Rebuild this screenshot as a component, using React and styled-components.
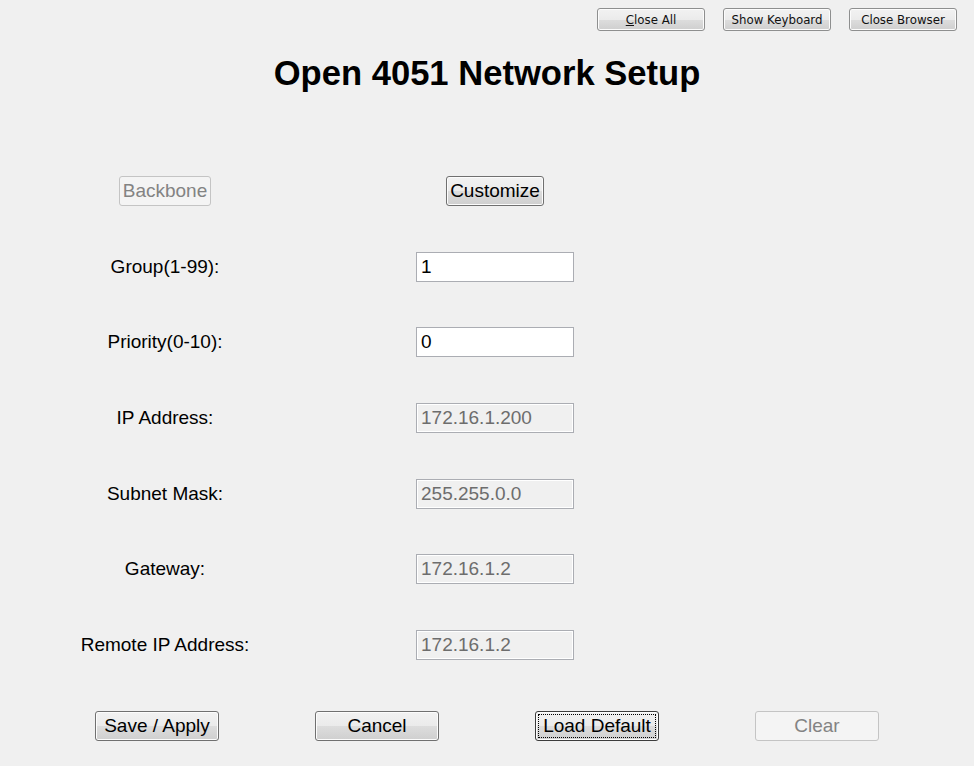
import React from "react";
import styled, { createGlobalStyle } from "styled-components";

const GlobalStyle = createGlobalStyle`
  html, body {
    margin: 0;
    padding: 0;
    background: #f0f0f0;
  }
  body {
    font-family: "Liberation Sans", Arial, sans-serif;
    color: #000;
  }
`;

const rows = [
  { label: "Group(1-99):", value: "1" },
  { label: "Priority(0-10):", value: "0" },
  { label: "IP Address:", value: "172.16.1.200", disabled: true },
  { label: "Subnet Mask:", value: "255.255.0.0", disabled: true },
  { label: "Gateway:", value: "172.16.1.2", disabled: true },
  { label: "Remote IP Address:", value: "172.16.1.2", disabled: true },
];

const App = () => {
  return (
    <Page>
      <GlobalStyle />
      <TopBar>
        <SysButton><u>C</u>lose All</SysButton>
        <SysButton>Show Keyboard</SysButton>
        <SysButton>Close Browser</SysButton>
      </TopBar>
      <Title>Open 4051 Network Setup</Title>
      <Form>
        <Cell><FormButton disabled>Backbone</FormButton></Cell>
        <Cell><FormButton>Customize</FormButton></Cell>
        {rows.map(r => (
          <React.Fragment key={r.label}>
            <Cell><Label>{r.label}</Label></Cell>
            <Field disabled={r.disabled} defaultValue={r.value} readOnly={r.disabled} />
          </React.Fragment>
        ))}
      </Form>
      <Actions>
        <ActionButton>Save / Apply</ActionButton>
        <ActionButton>Cancel</ActionButton>
        <ActionButton focused>Load Default</ActionButton>
        <ActionButton disabled>Clear</ActionButton>
      </Actions>
    </Page>
  );
};

export default App;

const Page = styled.div`
  width: 974px;
  height: 766px;
  display: flex;
  flex-direction: column;
  overflow: hidden;
`;

const TopBar = styled.div`
  display: flex;
  justify-content: flex-end;
  gap: 18px;
  padding: 8px 17px 0 0;
`;

const SysButton = styled.button`
  width: 108px;
  height: 23px;
  padding: 0;
  font-family: "DejaVu Sans", Tahoma, sans-serif;
  font-size: 11.8px;
  color: #111;
  border: 1px solid #8e8f8f;
  border-radius: 3px;
  background: linear-gradient(#f2f2f2 0%, #ebebeb 50%, #dddddd 51%, #cfcfcf 100%);
  box-shadow: inset 0 0 0 1px #fcfcfc;
  u { text-decoration: underline; }
`;

const Title = styled.h1`
  margin: 22px 0 0;
  height: 40px;
  line-height: 40px;
  text-align: center;
  font-size: 34.6px;
  font-weight: bold;
`;

const Form = styled.div`
  display: grid;
  grid-template-columns: 330px 158px;
  grid-auto-rows: 30px;
  column-gap: 86px;
  row-gap: 45.67px;
  margin-top: 83px;
`;

const Cell = styled.div`
  display: flex;
  align-items: center;
  justify-content: center;
`;

const Label = styled.span`
  font-size: 19px;
`;

const FormButton = styled.button`
  height: 30px;
  padding: 0 3px;
  font-family: "Liberation Sans", Arial, sans-serif;
  font-size: 19px;
  color: ${p => p.disabled ? "#838383" : "#000"};
  border: 1px solid ${p => p.disabled ? "#c4c4c4" : "#707070"};
  border-radius: 3px;
  background: ${p => p.disabled
    ? "#f4f4f4"
    : "linear-gradient(#f2f2f2 0%, #ebebeb 50%, #dddddd 51%, #cfcfcf 100%)"};
  box-shadow: inset 0 0 0 1px ${p => p.disabled ? "#f4f4f4" : "#fcfcfc"};
`;

const Field = styled.input`
  box-sizing: border-box;
  width: 158px;
  height: 30px;
  padding: 0 4px;
  font-family: "Liberation Sans", Arial, sans-serif;
  font-size: 19px;
  color: ${p => p.disabled ? "#6d6d6d" : "#000"};
  -webkit-text-fill-color: ${p => p.disabled ? "#6d6d6d" : "#000"};
  opacity: 1;
  border: 1px solid #abadb3;
  border-radius: 0;
  outline: none;
  background: ${p => p.disabled ? "#f0f0f0" : "#fff"};
  box-shadow: ${p => p.disabled ? "inset 0 0 0 1px #fff" : "none"};
`;

const Actions = styled.div`
  display: flex;
  gap: 96px;
  padding-left: 95px;
  margin-top: 51px;
`;

const ActionButton = styled.button`
  width: 124px;
  height: 30px;
  padding: 0;
  font-family: "Liberation Sans", Arial, sans-serif;
  font-size: 19px;
  color: ${p => p.disabled ? "#838383" : "#000"};
  border: 1px solid ${p => p.disabled ? "#c4c4c4" : p.focused ? "#3c3c3c" : "#707070"};
  border-radius: 3px;
  background: ${p => p.disabled
    ? "#f4f4f4"
    : "linear-gradient(#f2f2f2 0%, #ebebeb 50%, #dddddd 51%, #cfcfcf 100%)"};
  box-shadow: inset 0 0 0 1px ${p => p.disabled ? "#f4f4f4" : "#fcfcfc"};
  outline: ${p => p.focused ? "1px dotted #000" : "none"};
  outline-offset: -4px;
`;
